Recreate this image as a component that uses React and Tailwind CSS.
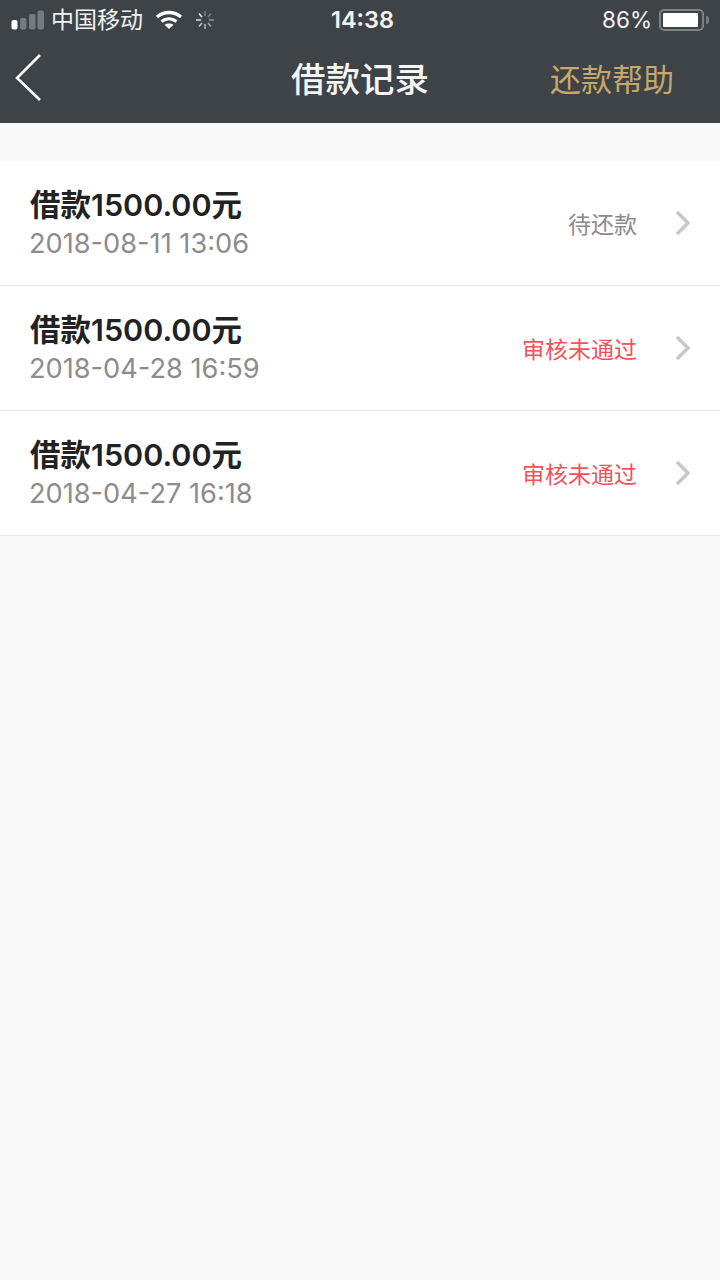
const font = { fontFamily: 'Inter, "Noto Sans CJK SC", sans-serif' }

const records = [
  { date: '2018-08-11 13:06', status: '待还款', color: 'text-[#8a8a8a]' },
  { date: '2018-04-28 16:59', status: '审核未通过', color: 'text-[#f4515a]' },
  { date: '2018-04-27 16:18', status: '审核未通过', color: 'text-[#f4515a]' },
]

const StatusBar = () => (
  <div className="h-10 flex items-center text-white relative">
    <div className="flex items-center w-[245px] pl-[11px]">
      <svg width="33" height="20" viewBox="0 0 33 20" fill="#ffffff">
        <rect x="0.5" y="10" width="6" height="9.5" rx="2" />
        <rect x="9" y="8" width="6.5" height="11.5" rx="2" opacity="0.3" />
        <rect x="18" y="4" width="6.5" height="15.5" rx="2" opacity="0.3" />
        <rect x="26.5" y="0.5" width="6.5" height="19" rx="2" opacity="0.3" />
      </svg>
      <span className="ml-[7px] text-[23px] leading-none text-[#f2f2f2]">中国移动</span>
      <svg className="ml-[12px] mt-[-1px]" width="28" height="20" viewBox="0 0 28 20" fill="none" stroke="#ffffff" strokeWidth="3.4">
        <path d="M2 7 C9 1 19 1 26 7" />
        <path d="M6.5 11.5 C11 8 17 8 21.5 11.5" />
        <path d="M14 19 L9.5 14.8 C12 13 16 13 18.5 14.8 Z" fill="#ffffff" stroke="none" />
      </svg>
      <svg className="ml-[12px]" width="20" height="20" viewBox="0 0 20 20" stroke="#ffffff" strokeWidth="1.6">
        <path d="M10 1 V6" opacity="0.3" />
        <path d="M16 3.5 L13 7" opacity="0.35" />
        <path d="M19 10 H14" opacity="0.4" />
        <path d="M16 16.5 L13 13" opacity="0.5" />
        <path d="M10 19 V14" opacity="0.6" />
        <path d="M4 16.5 L7 13" opacity="0.7" />
        <path d="M1 10 H6" opacity="0.8" />
        <path d="M4 3.5 L7 7" opacity="0.9" />
      </svg>
    </div>
    <span className="absolute left-[331px] top-[7px] text-[23.5px] leading-[26px] font-semibold text-[#f2f2f2]">14:38</span>
    <div className="ml-auto flex items-center pr-[11px]">
      <span className="text-[22.5px] leading-none text-[#f2f2f2]">86%</span>
      <div className="ml-[7px] w-[45px] h-[22px] rounded-[5px] border-2 border-[#7c8083] p-[2px]">
        <div className="h-full w-[35px] bg-white rounded-[1px]" />
      </div>
      <div className="ml-[2px] w-[3px] h-[8px] rounded-r-sm bg-[#7c8083]" />
    </div>
  </div>
)

const NavBar = () => (
  <div className="h-[83px] flex items-center relative pb-[5px]">
    <svg className="ml-[14px] mt-[-2px]" width="30" height="50" viewBox="0 0 30 50" fill="none" stroke="#ffffff" strokeWidth="2.6">
      <path d="M26 2 L3 25 L26 47" />
    </svg>
    <h1 className="absolute left-[291px] top-[18px] text-[34.5px] leading-[44px] font-medium text-[#f5f5f5]">借款记录</h1>
    <span className="ml-auto mr-[46px] mt-[1px] text-[31px] leading-[44px] text-[#c7a86c]">还款帮助</span>
  </div>
)

const Row = ({ date, status, color }) => (
  <div className="h-[125px] flex items-center border-b border-[#e6e6e6] bg-white pl-[30px] pr-[27px]">
    <div className="flex-1 pb-[1px]">
      <div className="text-[30.5px] leading-[40px] font-semibold text-[#222222]">借款1500.00元</div>
      <div className="ml-[-1px] mt-[2px] text-[27.2px] leading-[34px] text-[#8c8c8c]">{date}</div>
    </div>
    <span className={`mt-[3px] text-[23px] leading-[30px] ${color}`}>{status}</span>
    <svg className="ml-[36px]" width="20" height="26" viewBox="0 0 20 26" fill="none" stroke="#c6c6cb" strokeWidth="3.4">
      <path d="M4 2 L15 13 L4 24" />
    </svg>
  </div>
)

export default function App() {
  return (
    <div className="w-[720px] h-[1280px] bg-[#f9f9f9] overflow-hidden" style={font}>
      <div className="bg-[#3e4347]">
        <StatusBar />
        <NavBar />
      </div>
      <div className="mt-[38px]">
        {records.map((r) => (
          <Row key={r.date} {...r} />
        ))}
      </div>
    </div>
  )
}
